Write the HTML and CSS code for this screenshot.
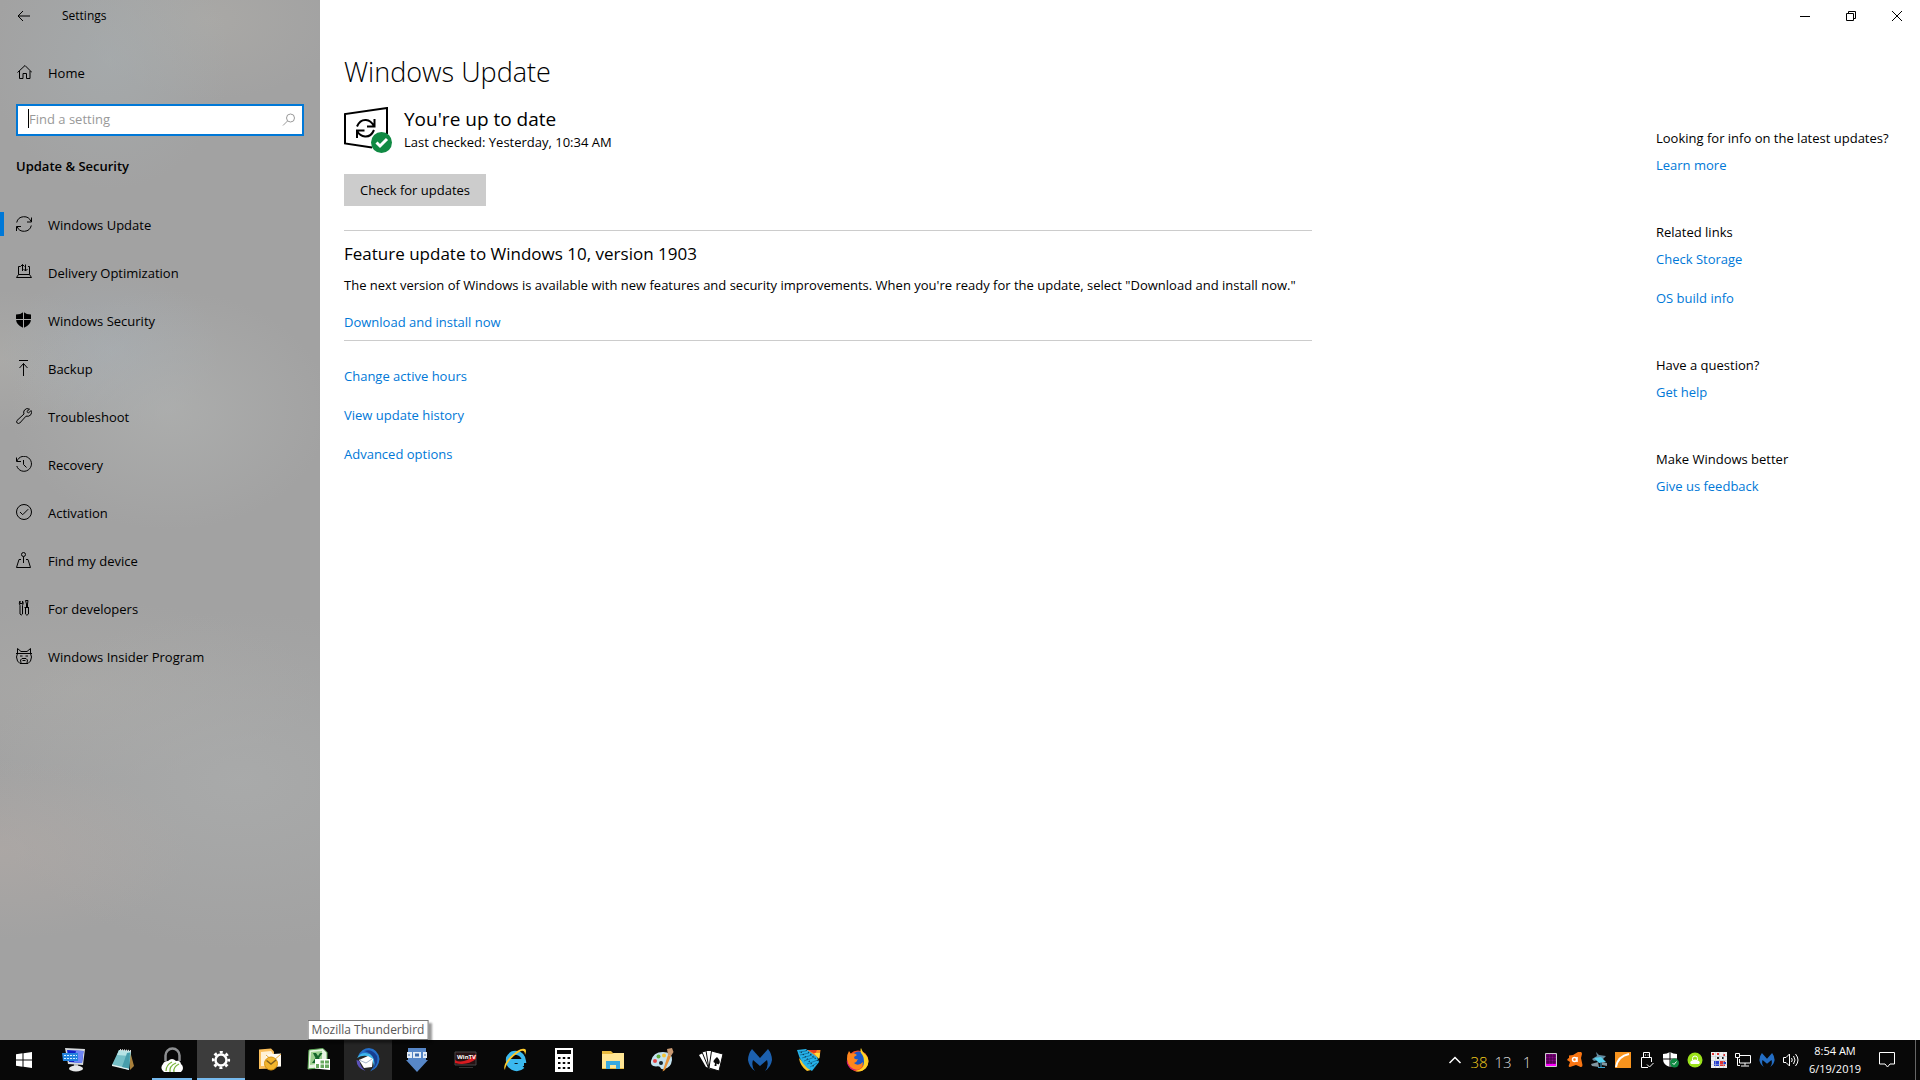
FILE: index.html
```html
<!DOCTYPE html>
<html lang="en">
<head>
<meta charset="utf-8">
<meta name="viewport" content="width=device-width, initial-scale=1">
<title>Settings</title>
<link rel="stylesheet" href="styles.css">
</head>
<body>
<div class="desktop">
  <div class="window">
    <div class="sidebar">
      <header class="titlebar">
        <button class="back" type="button" aria-label="Back">
          <svg width="14" height="12" viewBox="0 0 14 12" class="line"><path d="M13 6H1M6 1L1 6l5 5"/></svg>
        </button>
        <span class="app-name">Settings</span>
      </header>
      <a class="nav-link home" href="#home">
        <svg width="16" height="16" viewBox="0 0 16 16" class="line"><path d="M1.500 8.500L9 1.500l7 7M3.500 7v7.500h3.500V9.500h3.500v5h3.500V7"/></svg>
        <span>Home</span>
      </a>
      <form class="search" role="search">
        <input class="search-input" type="text" placeholder="Find a setting" aria-label="Find a setting">
        <svg class="search-icon" width="14" height="14" viewBox="0 0 14 14"><circle cx="8.500" cy="5" r="4"/><path d="M5.500 8L1 12.500"/></svg>
      </form>
      <h2 class="section-title">Update &amp; Security</h2>
      <nav class="nav" aria-label="Update &amp; Security">
        <a class="nav-link current" href="#update" aria-current="page">
          <svg width="16" height="16" viewBox="0 0 16 16" class="line"><path d="M.7 6.500A7.500 7.500 0 0 1 15 5.500M15.500 1.500v4.500H11M15.300 9.500A7.500 7.500 0 0 1 1 10.500M.5 15v-4.500H5"/></svg>
          <span>Windows Update</span>
        </a>
        <a class="nav-link" href="#delivery">
          <svg width="16" height="16" viewBox="0 0 16 16" class="line"><path d="M4.500 2.500H2.500v8L.5 13.500h15l-2-3v-8h-1.500M2.500 10.500h11M6.500 7V.5M4.500 2.500l2-2 2 2M9.500.5V7M7.500 5l2 2 2-2"/></svg>
          <span>Delivery Optimization</span>
        </a>
        <a class="nav-link" href="#security">
          <svg width="16" height="16" viewBox="0 0 16 16"><path d="M0 2.500Q4.500 2.500 7.500 0 10.500 2.500 15 2.500V7Q15 13 7.500 16 0 13 0 7z"/><path d="M7.500 0v16M0 7.500h15" stroke="#aaa"/></svg>
          <span>Windows Security</span>
        </a>
        <a class="nav-link" href="#backup">
          <svg width="16" height="16" viewBox="0 0 16 16" class="line"><path d="M3 .5h9M7.500 16V3.500M3.500 8l4-4.500 4 4.500"/></svg>
          <span>Backup</span>
        </a>
        <a class="nav-link" href="#troubleshoot">
          <svg width="16" height="16" viewBox="0 0 16 16" class="line"><path d="M13.500 1.200Q10.500-.5 8.500 2 7 4 8 6L1 12.500Q0 14 1.200 15T3.800 15L10 8.200Q13 9 15 6.500 16 4.500 15 2.500L12.500 5 10.800 3.500z"/></svg>
          <span>Troubleshoot</span>
        </a>
        <a class="nav-link" href="#recovery">
          <svg width="16" height="16" viewBox="0 0 16 16" class="line"><path d="M1 5A7.500 7.500 0 1 1 .8 10M.5 1.500V5.500H5M7.500 4v4.500l3 3"/></svg>
          <span>Recovery</span>
        </a>
        <a class="nav-link" href="#activation">
          <svg width="16" height="16" viewBox="0 0 16 16" class="line"><circle cx="8" cy="8" r="7.500"/><path d="M4 8l2.700 2.700 5.500-5.500"/></svg>
          <span>Activation</span>
        </a>
        <a class="nav-link" href="#find">
          <svg width="16" height="16" viewBox="0 0 16 16" class="line"><circle cx="7.500" cy="2.500" r="2"/><path d="M7.500 4.500V11M5 7.500H3L.5 15.500h14L12 7.500h-2"/></svg>
          <span>Find my device</span>
        </a>
        <a class="nav-link" href="#developers">
          <svg width="16" height="16" viewBox="0 0 16 16" class="line"><path d="M4 1Q2.500 3 4 5.500V14q1.300 2 2.500 0V5.500Q8 3 6.500 1V3.500H4zM9.500.5h2.500L11.500 4v3.500h1V14q-1.700 2.500-3 0V7.500h1V4zM8.500 7.500H13"/></svg>
          <span>For developers</span>
        </a>
        <a class="nav-link" href="#insider">
          <svg width="16" height="16" viewBox="0 0 16 16" class="line"><path d="M1.500 5V.5L5 3.500h6L14.500.5V5M0 5.500h16M1.500 5.500L.5 9l1 4L4 15.500h8l2.500-2.500 1-4-1-3.500M4 8h2.500M9.500 8H12M5 15l-.5-3L6 10.500h4l1.500 1.500-.5 3M6.500 12.500h3"/></svg>
          <span>Windows Insider Program</span>
        </a>
      </nav>
    </div>

    <main class="main">
      <div class="window-controls">
        <button type="button" aria-label="Minimize"><svg width="10" height="10" viewBox="0 0 10 10" class="line"><path d="M0 5.500h10"/></svg></button>
        <button type="button" aria-label="Restore"><svg width="10" height="10" viewBox="0 0 10 10" class="line"><path d="M.5 2.500h7v7h-7zM2.500 2.500v-2h7v7h-2"/></svg></button>
        <button type="button" aria-label="Close"><svg width="10" height="10" viewBox="0 0 10 10" class="line"><path d="M0 0l10 10M10 0L0 10"/></svg></button>
      </div>
      <div class="page">
        <div class="content">
          <h1>Windows Update</h1>
          <section class="status">
            <svg width="48" height="46" viewBox="0 0 48 46" fill="none" stroke="#000" stroke-width="2"><path d="M28 40.500L1 36.500V7L43 1v26"/><path d="M13 19.500Q16 12.500 22 13q5 .5 8 6M30.500 12v7.500H23M30 23Q27 30 21 29.500q-5-.5-8-5.500M13 31v-7.500h7.500"/><circle cx="37.500" cy="35.500" r="10.500" fill="#108a43" stroke="none"/><path d="M32.500 35.500l3.500 3.500 7-7" stroke="#fff" stroke-width="3"/></svg>
            <div>
              <h2 class="status-title">You're up to date</h2>
              <p>Last checked: Yesterday, 10:34 AM</p>
            </div>
          </section>
          <button class="check" type="button">Check for updates</button>
          <section class="feature">
            <h2>Feature update to Windows 10, version 1903</h2>
            <p>The next version of Windows is available with new features and security improvements. When you're ready for the update, select "Download and install now."</p>
            <a href="#install">Download and install now</a>
          </section>
          <ul class="links">
            <li><a href="#hours">Change active hours</a></li>
            <li><a href="#history">View update history</a></li>
            <li><a href="#advanced">Advanced options</a></li>
          </ul>
        </div>
        <aside class="help">
          <section><h3>Looking for info on the latest updates?</h3><ul class="links"><li><a href="#learn">Learn more</a></li></ul></section>
          <section><h3>Related links</h3><ul class="links"><li><a href="#storage">Check Storage</a></li><li><a href="#build">OS build info</a></li></ul></section>
          <section><h3>Have a question?</h3><ul class="links"><li><a href="#help">Get help</a></li></ul></section>
          <section><h3>Make Windows better</h3><ul class="links"><li><a href="#feedback">Give us feedback</a></li></ul></section>
        </aside>
      </div>
    </main>
  </div>

  <footer class="taskbar">
    <button class="start" type="button" aria-label="Start"><svg width="16" height="16" viewBox="0 0 16 16" fill="#fff"><path d="M0 2.200L6.500 1.300V7.500H0zM7.500 1.200L16 0v7.500H7.500zM0 8.500h6.500v6.200L0 13.800zM7.500 8.500H16V16l-8.500-1.200z"/></svg></button>
    <div class="apps">
      <button type="button" aria-label="Remote keyboard"><svg width="24" height="24" viewBox="0 0 24 24"><path d="M3 0l20 1-2 16-15-1z" fill="#d5d9dc"/><path d="M5 2l16.500 1L20 15 7 14z" fill="#1022c8"/><path d="M14 2.500l7.500.5L20 15l-8-.6z" fill="#6f86f4"/><path d="M0 5h16v8H1z" fill="#2383dd"/><path d="M2 7.500h13M2 10.500h13" stroke="#d4efff" stroke-dasharray="2 1"/><path d="M12 16h4v3h-4z" fill="#b8bdc0"/><ellipse cx="14" cy="20.500" rx="7" ry="3" fill="#e5e7e8"/></svg></button>
      <button type="button" aria-label="Notepad"><svg width="24" height="24" viewBox="0 0 24 24"><path d="M19 3l4 15-4 4z" fill="#a9803b"/><path d="M8 2l12 1-2 19L1 17z" fill="#76bfc7"/><path d="M8 2l12 1-1 5-13-1z" fill="#b6e3e5"/><path d="M1 16.500l17 4V22L1 18z" fill="#e3eeee"/><path d="M9 2l11 1" stroke="#ddd" stroke-width="2" stroke-dasharray="1 1"/><path d="M16 5l-5 14 7 1.500 1-16z" fill="#479dab"/></svg></button>
      <button class="running" type="button" aria-label="Webroot"><svg width="26" height="26" viewBox="0 0 26 26"><path d="M6.500 14V8.500a7 7 0 0 1 14 0V14" fill="none" stroke="#8d8f91" stroke-width="2.500"/><path d="M5 25a5 5 0 0 1-1-8q1-3 5-3 4-4 8 0 4-1 5 3a5 5 0 0 1 0 8z" fill="#fff"/><path d="M7 24q0-6 6-9M11 25q-1-6 6-9M15 25q-1-5 5-8" fill="none" stroke="#79b43c" stroke-width="1.200"/></svg></button>
      <button class="running active" type="button" aria-label="Settings"><svg width="20" height="20" viewBox="0 0 20 20" fill="none" stroke="#fff"><circle cx="10" cy="10" r="5.500" stroke-width="2.500"/><circle cx="10" cy="10" r="7.800" stroke-width="2.600" stroke-dasharray="3 3.126" stroke-dashoffset="1.500"/></svg></button>
      <button type="button" aria-label="Outlook"><svg width="24" height="24" viewBox="0 0 24 24"><path d="M1 1.500L13 .5l3 3v17L1 21z" fill="#fbbf5b"/><path d="M3 4l10-1 2 3v12H3z" fill="#fff1d5"/><path d="M8 6.500l15-1v13l-15 1z" fill="#fffaf0"/><path d="M8 7l7 6 8-7" fill="none" stroke="#e8a93a"/><circle cx="13" cy="15.500" r="6.500" fill="#f3b52c" stroke="#d8930f"/><path d="M8.500 12.500L13 16l5-4" fill="none" stroke="#7d5d1c" stroke-width="1.500"/></svg></button>
      <button type="button" aria-label="Excel"><svg width="24" height="24" viewBox="0 0 24 24"><path d="M2 2l14-1.500 4 4V19L1 21z" fill="#e9f5e4" stroke="#5ca855"/><path d="M4 4l11-1v12L3 17z" fill="#9bcf8e"/><path d="M6 5h3l2 3 2-3h2.500l-3.500 5 3.500 5h-3L10 12l-2 3H5l3.500-5z" fill="#14652b"/><path d="M8 11h15v11L8 20.500z" fill="#fff"/><path d="M9 16h3v4H9zM13.500 12.500h3.500v3h-3.500zM18 12.500h4v3h-4zM13.500 16.500h3.500v3.500h-3.500zM18 16.500h4V20h-4z" fill="#68a95f"/></svg></button>
      <button class="hover" type="button" aria-describedby="app-tip" aria-label="Mozilla Thunderbird"><svg width="24" height="24" viewBox="0 0 24 24"><path d="M2 8Q6 0 13 0q9 1 10.500 11-.5 9-9.500 12.500Q23 13 16 7 10 3 2 8z" fill="#256fc9"/><path d="M8 3q8-3 13 5 2 7-4 13 3-8-1-13-3-4-8-5z" fill="#173e91"/><path d="M1 10q4-7 13-4 6 4 4 13-1-9-7-11-5-1-10 2z" fill="#3eb6ed"/><path d="M3 12l9-4 5 3-1 8-8 1z" fill="#fff"/><path d="M3 12l7 3 6-4" fill="none" stroke="#a7b6ca"/><path d="M.5 12q0 8 9 11-5-4-6-10z" fill="#5b52b9"/></svg><span class="tooltip" id="app-tip" role="tooltip">Mozilla Thunderbird</span></button>
      <button type="button" aria-label="USB image tool"><svg width="24" height="24" viewBox="0 0 24 24"><path d="M3 0h18v12h2L12 24 1 12h2z" fill="#5787c8"/><path d="M2 4h5v6H2zM18 4h4v6h-4z" fill="#e4edf7"/><path d="M8 4h8v6H8z" fill="#e4edf7"/><path d="M10 5.500h4v3h-4zM3.500 6h1v2h-1zM19.500 6h1v2h-1z" fill="#3e6cad"/></svg></button>
      <button type="button" aria-label="WinTV"><svg width="24" height="18" viewBox="0 0 24 18"><path d="M1 1h21v13H1z" fill="#271214" stroke="#444"/><path d="M1 9q8 5 21-6v5Q13 15 1 12z" fill="#d61b20"/><path d="M5 16.500h14" stroke="#333"/><text x="3" y="8" class="tv-label">WinTV</text></svg></button>
      <button type="button" aria-label="Internet Explorer"><svg width="24" height="24" viewBox="0 0 24 24"><path d="M20 18.500Q15 23 9.500 20T5 10Q8 4 14 5t7 8H8q1 5 5 5 3 0 4-2h4" fill="none" stroke="#3bb9ef" stroke-width="4"/><path d="M2 22Q-1 18 7 9 17-1 22 1q2 1 0 6 0-5-4-4Q9 8 4 16q-2 4-2 6z" fill="#fcca2d"/></svg></button>
      <button type="button" aria-label="Calculator"><svg width="18" height="24" viewBox="0 0 18 24"><path d="M0 0h18v24H0z" fill="#fff"/><path d="M2 2h14v4H2z" fill="#080808"/><path d="M3 10h12M3 15h12M3 20h12" stroke="#080808" stroke-width="2" stroke-dasharray="2.500 2.250"/></svg></button>
      <button type="button" aria-label="File Explorer"><svg width="22" height="20" viewBox="0 0 22 20"><path d="M0 2V1h9l2 2h11v16H0z" fill="#e8ba3f"/><path d="M0 4h10l2-1h10v15H0z" fill="#ffe594"/><path d="M4 19v-8h14v8h-4v-4H8v4z" fill="#38a9df"/></svg></button>
      <button type="button" aria-label="Paint"><svg width="24" height="24" viewBox="0 0 24 24"><path d="M1 13Q3 4 13 4q9 0 9 8-1 8-8 9-3 1-4-2-1-1-4-.500Q0 18 1 13z" fill="#c4e2ef"/><circle cx="5" cy="13" r="2" fill="#e44747"/><circle cx="8.500" cy="8.500" r="2" fill="#5fae3e"/><circle cx="14" cy="7.500" r="2" fill="#f5c537"/><circle cx="11" cy="15" r="2" fill="#14232a"/><path d="M12.500 23.500L18 7l3 1-6 14z" fill="#e6943b"/><path d="M17 1l5-1 1.500 4L21 8l-3-1z" fill="#c99972"/></svg></button>
      <button type="button" aria-label="Cards"><svg width="24" height="22" viewBox="0 0 24 22"><path d="M0 6l6-3 5 16-4-1z" fill="#fff"/><path d="M3 3l7-2 5 18-5 1z" fill="#fff" stroke="#080808"/><path d="M7 1.500h8L14 20l-4 .5z" fill="#fff" stroke="#080808"/><path d="M12.500 2L24 5l-4 17-10-3z" fill="#fff" stroke="#080808"/><path d="M18 8q5 5 1.500 7.500l-2-1v2.500h-2l.5-3q-4-1 2-6z" fill="#080808"/></svg></button>
      <button type="button" aria-label="Malwarebytes"><svg width="24" height="22" viewBox="0 0 24 22"><path d="M4 0l8 9 8-9q4 5 4 11-1 7-7 11 4-5 2-11l-7 6-7-6q-2 6 2 11Q1 18 0 11 0 5 4 0z" fill="#1c60ae"/></svg></button>
      <button type="button" aria-label="Video converter"><svg width="24" height="24" viewBox="0 0 24 24"><path d="M8 2h15.500l-1 8-4-1z" fill="#fb8c24"/><path d="M11 2h9l-2 4z" fill="#e73d22"/><path d="M17 5h6l-1 6z" fill="#ffdd3d"/><path d="M2 10l12 12-4 1Q3 18 2 10z" fill="#ffc629"/><path d="M0 2l9-1 11 8 2 5-7 9Q4 18 0 2z" fill="#26b2e8"/><path d="M2 4l7-1M3 7l9-2M5 10l10-3M7 13l11-4M10 16l11-4M13 19l7-4" stroke="#157aac"/><path d="M4 4l14 16M9 2l12 11" stroke="#123950" stroke-dasharray="1 2" stroke-width="1.500"/></svg></button>
      <button type="button" aria-label="Firefox"><svg width="24" height="24" viewBox="0 0 24 24"><circle cx="12" cy="13" r="10.500" fill="#f04b24"/><circle cx="13" cy="11" r="7.500" fill="#1c58c7"/><path d="M15 0q1 4 5 7 5 6 0 13-5 5-11 3 9-1 9-9 0-6-3-9-1-3 0-5z" fill="#ffd326"/><path d="M3 3l2 3q3-2 6 1L8 9q0 3 4 2-1 3-4 4 4 4 9-1 0 8-8 8Q1 20 1 11q0-5 2-8z" fill="#ff861c"/><path d="M1 12q2 9 10 10-5 1-8-3T1 12z" fill="#d41679"/></svg></button>
    </div>
    <div class="tray">
      <button type="button" aria-label="Show hidden icons"><svg width="14" height="8" viewBox="0 0 14 8" class="white"><path d="M1.500 7L7 1.500 12.500 7" stroke-width="1.500"/></svg></button>
      <span class="reading warm">38</span>
      <span class="reading">13</span>
      <span class="reading">1</span>
      <button type="button" aria-label="Load monitor"><svg width="12" height="14" viewBox="0 0 12 14"><path d="M.5.5h11v13H.5z" fill="#8a008a" stroke="#ccc"/><path d="M3 1v10M6 1v10M9 1v10M1 3h10M1 6h10M1 9h10" stroke="#300030" stroke-width=".7"/><path d="M1 12h10" stroke="#f0f" stroke-width="2"/></svg></button>
      <button type="button" aria-label="Avast"><svg width="16" height="16" viewBox="0 0 16 16"><path d="M2 3.500L6 3l5-3q4-1 4 2l-1 4 1.500 7q0 3-3 1.500L9 13l-6 2q-2-.5-1-2l1-3-3-2q1-2 2-2z" fill="#f97512"/><circle cx="7.500" cy="7.500" r="2" fill="none" stroke="#fff" stroke-width="1.500"/><path d="M10 5v5" stroke="#fff" stroke-width="1.500"/></svg></button>
      <button type="button" aria-label="Satellite"><svg width="16" height="16" viewBox="0 0 16 16"><path d="M5 0l3 3 7 1-3 3-9 2-2-2 5-3z" fill="#658ca1"/><path d="M3 6l7-1 5 5-7 1z" fill="#57d1ee"/><path d="M0 12l7-2 1 5-7-1zM11 10l5 1v3l-5-1z" fill="#8296a0"/><path d="M10 10v5M7 15.500h7" stroke="#3ca1cc"/></svg></button>
      <button type="button" aria-label="Tuner"><svg width="16" height="16" viewBox="0 0 16 16"><path d="M0 0h16v16H0z" fill="#f7931d"/><path d="M1 15Q3 4 14 2" fill="none" stroke="#fff" stroke-width="2"/></svg></button>
      <button type="button" aria-label="Safely remove hardware"><svg width="14" height="16" viewBox="0 0 14 16" class="white"><path d="M3.500 5V.5h6V5M8 15.500H1.500V5.500h10V10M5 3h1M7.500 3h1M7 12.500l2.500 2.500L13.500 11"/></svg></button>
      <button type="button" aria-label="Security status"><svg width="16" height="16" viewBox="0 0 16 16"><path d="M0 2q4 0 7-2 3 2 7 2v5q0 6-7 8-7-2-7-8z" fill="#fff"/><path d="M7 0v15M0 7h14" stroke="#080808"/><circle cx="11.500" cy="11" r="4.500" fill="#108a43"/><path d="M9.500 11l1.500 1.500 2.500-3" fill="none" stroke="#fff"/></svg></button>
      <button type="button" aria-label="Webroot status"><svg width="16" height="16" viewBox="0 0 16 16"><circle cx="8" cy="8" r="7.500" fill="#9be21b"/><path d="M5.500 8V6.500a2.500 2.500 0 0 1 5 0V8" fill="none" stroke="#fff"/><path d="M4 12q-2-2 1-3.500 3-2 6 0 3 1.500 1 3.500z" fill="#fff"/></svg></button>
      <button type="button" aria-label="Grid monitor"><svg width="16" height="16" viewBox="0 0 16 16"><path d="M0 0h16v16H0z" fill="#eee"/><path d="M1 1h2v2H1zM6 1h2v2H6zM12 2h2v2h-2zM9 9h5v5H9z" fill="#df3434"/><path d="M3 9h5v5H3zM12 10h3v2h-3z" fill="#253ed0"/><path d="M6 5h2v2H6zM11 5h2v2h-2z" fill="#222"/><path d="M0 4.500h16M0 8.500h16M0 12.500h16M4.500 0v16M8.500 0v16M12.500 0v16" stroke="#bcc6d5" stroke-width=".5"/></svg></button>
      <button type="button" aria-label="Network"><svg width="16" height="14" viewBox="0 0 16 14" class="white"><path d="M5 2.500h10.500v7.500H4.500V6M.5.500h4v4h-4zM2.500 5v7.500H5M10 10v2.500M6 13h8"/></svg></button>
      <button type="button" aria-label="Malwarebytes status"><svg width="16" height="14" viewBox="0 0 24 22"><path d="M4 0l8 9 8-9q4 5 4 11-1 7-7 11 4-5 2-11l-7 6-7-6q-2 6 2 11Q1 18 0 11 0 5 4 0z" fill="#236dc3"/></svg></button>
      <button type="button" aria-label="Volume"><svg width="16" height="14" viewBox="0 0 16 14" class="white"><path d="M.5 4.500H3L6.500 1v12L3 9.500H.5zM8.500 5q1.500 2 0 4M10.500 3q3 4 0 8M12.500 1q5 6 0 12"/></svg></button>
    </div>
    <time class="clock" datetime="2019-06-19T08:54"><span>8:54 AM</span><span>6/19/2019</span></time>
    <button class="start" type="button" aria-label="Notifications"><svg width="16" height="16" viewBox="0 0 16 16" class="white"><path d="M.5.500h15v11.500h-4.500L8.500 15 6 12H.5z"/></svg></button>
    <button class="show-desktop" type="button" aria-label="Show desktop"></button>
  </footer>
</div>
</body>
</html>
```
FILE: styles.css
```css
* { box-sizing: border-box; }

body {
  margin: 0;
  font: 13px/20px "Open Sans", "Noto Sans", sans-serif;
  color: #000;
  background: #fff;
}

h1, h2, h3, p, ul { margin: 0; padding: 0; font-size: 13px; font-weight: 400; }
ul { list-style: none; }
a { color: #0078d7; text-decoration: none; }
button { border: 0; padding: 0; background: none; font: inherit; color: inherit; }
svg { display: block; flex: none; }

.line { fill: none; stroke: #000; stroke-width: 1; }
.white { fill: none; stroke: #fff; stroke-width: 1; }

.desktop { min-height: 100vh; display: flex; flex-direction: column; }
.window { flex: 1; display: flex; }

/* Sidebar */
.sidebar {
  flex: 0 0 320px;
  background:
    radial-gradient(ellipse 190px 90px at 0 850px, rgba(182, 172, 167, .45), transparent),
    radial-gradient(ellipse 160px 120px at 170px 410px, rgba(178, 180, 179, .6), transparent),
    radial-gradient(ellipse 110px 80px at 110px 350px, rgba(165, 173, 180, .6), transparent),
    radial-gradient(ellipse 140px 70px at 0 360px, rgba(178, 177, 173, .5), transparent),
    radial-gradient(ellipse 120px 130px at 110px 60px, rgba(168, 176, 179, .5), transparent),
    radial-gradient(ellipse 130px 80px at 210px 20px, rgba(176, 174, 169, .5), transparent),
    radial-gradient(ellipse 260px 170px at 240px 780px, rgba(173, 175, 175, .6), transparent),
    radial-gradient(ellipse 240px 90px at 80px 690px, rgba(173, 172, 169, .5), transparent),
    #a2a2a2;
}
.titlebar { height: 32px; display: flex; align-items: center; font-size: 12px; }
.back { width: 48px; height: 32px; display: grid; place-items: center; }
.app-name { padding-left: 14px; }
.nav-link { position: relative; height: 48px; padding: 0 16px; display: flex; align-items: center; gap: 16px; color: #000; }
.nav-link span { padding-top: 2px; }
.home { margin-top: 16px; }
.search { position: relative; margin: 8px 16px 20px; display: flex; }
.search-input {
  width: 100%;
  height: 32px;
  padding: 0 36px 2px 11px;
  border: 2px solid #0078d7;
  border-radius: 0;
  outline: 0;
  background: #fff;
  font: inherit;
}
.search-input::placeholder { color: #999; opacity: 1; }
.search::before { content: ""; position: absolute; left: 12px; top: 5px; width: 1px; height: 19px; background: #000; }
.search-icon { position: absolute; right: 8px; top: 9px; fill: none; stroke: #999; }
.section-title { padding: 0 16px; font-weight: 600; }
.nav { margin-top: 24px; }
.current::before { content: ""; position: absolute; left: 0; top: 12px; width: 4px; height: 24px; background: #0078d7; }

/* Main */
.main { flex: 1; min-width: 0; }
.window-controls { height: 32px; display: flex; justify-content: flex-end; }
.window-controls button { width: 46px; display: grid; place-items: center; }
.page { display: flex; justify-content: space-between; gap: 24px; padding: 20px 24px 24px; }
.content { flex: 0 1 968px; }
h1 { font-size: 27px; line-height: 40px; font-weight: 300; }
.status { margin-top: 15px; display: flex; gap: 12px; }
.status-title { font-size: 19px; line-height: 25px; }
.check { margin: 21px 0 24px; height: 32px; padding: 0 16px; background: #ccc; }
.feature { padding: 11px 0 8px; border: solid #ccc; border-width: 1px 0; }
.feature h2 { font-size: 17px; line-height: 24px; }
.feature p { margin: 9px 0 17px; }
.links { display: flex; flex-direction: column; gap: 19px; }
.content .links { margin-top: 25px; }
.help { flex: 0 0 240px; padding-top: 76px; display: flex; flex-direction: column; gap: 47px; }
.help h3 { margin-bottom: 7px; white-space: nowrap; }

/* Taskbar */
.taskbar { height: 40px; display: flex; background: #080808; color: #fff; }
.taskbar button { display: grid; place-items: center; }
.start { width: 48px; }
.apps { margin-left: 2px; display: flex; gap: 1px; }
.apps button { position: relative; width: 48px; }
.apps .active { background: #3c3c3c; }
.apps .hover { background: #252525; }
.running::after { content: ""; position: absolute; left: 4px; right: 4px; bottom: 0; height: 2px; background: #76b9ed; }
.active::after { left: 0; right: 0; }
.tooltip {
  position: absolute;
  bottom: 100%;
  left: 50%;
  transform: translateX(-50%);
  padding: 0 3px;
  border: 1px solid #767676;
  background: #fff;
  box-shadow: 3px 3px 2px rgba(0, 0, 0, .4);
  color: #575757;
  font-size: 12px;
  line-height: 18px;
  white-space: nowrap;
}
.tv-label { font: 700 6px "Open Sans", sans-serif; fill: #fff; }
.tray { margin-left: auto; display: flex; }
.tray button, .reading { width: 24px; }
.reading { padding-top: 2px; font-size: 15px; line-height: 40px; font-weight: 300; text-align: center; color: #ddd; }
.warm { color: #f4cf1c; }
.clock { width: 60px; padding: 2px 0 0 4px; display: flex; flex-direction: column; align-items: center; font-size: 11px; line-height: 18px; white-space: nowrap; }
.show-desktop { width: 5px; margin-left: 4px; border-left: 1px solid #666; }
```
